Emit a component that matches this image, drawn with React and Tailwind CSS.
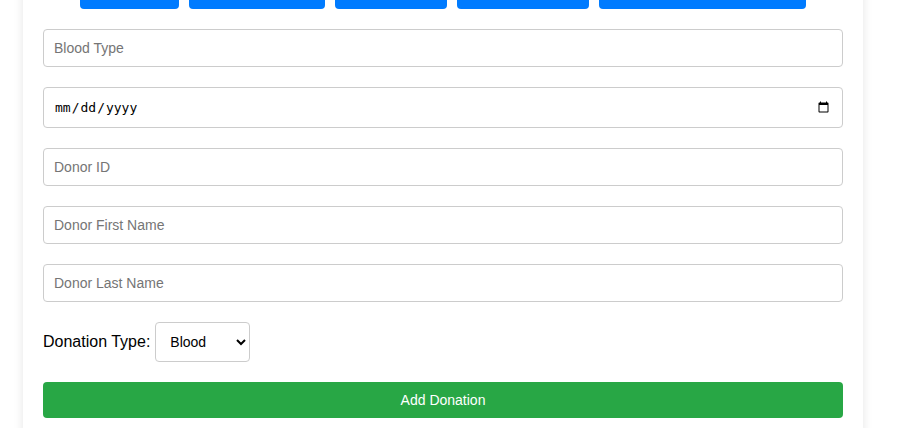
const navButtons = [
  { label: "Home", w: "w-[99px]" },
  { label: "Donations List", w: "w-[136px]" },
  { label: "Donors", w: "w-[112px]" },
  { label: "Inventory", w: "w-[132px]" },
  { label: "Add Donation Record", w: "w-[207px]" },
];

const fields = ["Donor ID", "Donor First Name", "Donor Last Name"];

export default function App() {
  return (
    <div className="min-h-screen bg-white overflow-hidden font-['Liberation_Sans',Arial,sans-serif]">
      <div className="ml-[23px] w-[840px] -mt-[27px] bg-white px-5 pb-5 shadow-[0_0_10px_rgba(0,0,0,0.1)]">
        {/* nav row sits mostly above the viewport, only the bottom edge shows */}
        <div className="flex justify-center gap-[10px] mb-5">
          {navButtons.map((b) => (
            <button
              key={b.label}
              aria-label={b.label}
              className={`${b.w} h-9 rounded-[4px] bg-[#007bff]`}
            />
          ))}
        </div>

        <form className="flex flex-col gap-5">
          <input
            type="text"
            placeholder="Blood Type"
            className="h-[38px] w-full rounded-[4px] border border-[#ccc] px-[10px] text-sm placeholder:text-[#757575] outline-none"
          />
          <input
            type="date"
            className="h-[41px] w-full rounded-[4px] border border-[#ccc] px-[10px] text-[13px] font-['DejaVu_Sans_Mono',monospace] text-black outline-none"
          />
          {fields.map((f) => (
            <input
              key={f}
              type="text"
              placeholder={f}
              className="h-[38px] w-full rounded-[4px] border border-[#ccc] px-[10px] text-sm placeholder:text-[#757575] outline-none"
            />
          ))}

          <div className="flex items-center gap-[5px]">
            <label className="text-base text-black">Donation Type:</label>
            <select className="h-10 w-[95px] rounded-[4px] border border-[#ccc] bg-white px-[10px] text-sm text-black">
              <option>Blood</option>
              <option>Plasma</option>
              <option>Platelets</option>
            </select>
          </div>

          <button
            type="button"
            className="h-9 w-full rounded-[4px] bg-[#28a745] text-sm text-white"
          >
            Add Donation
          </button>
        </form>
      </div>
    </div>
  );
}
